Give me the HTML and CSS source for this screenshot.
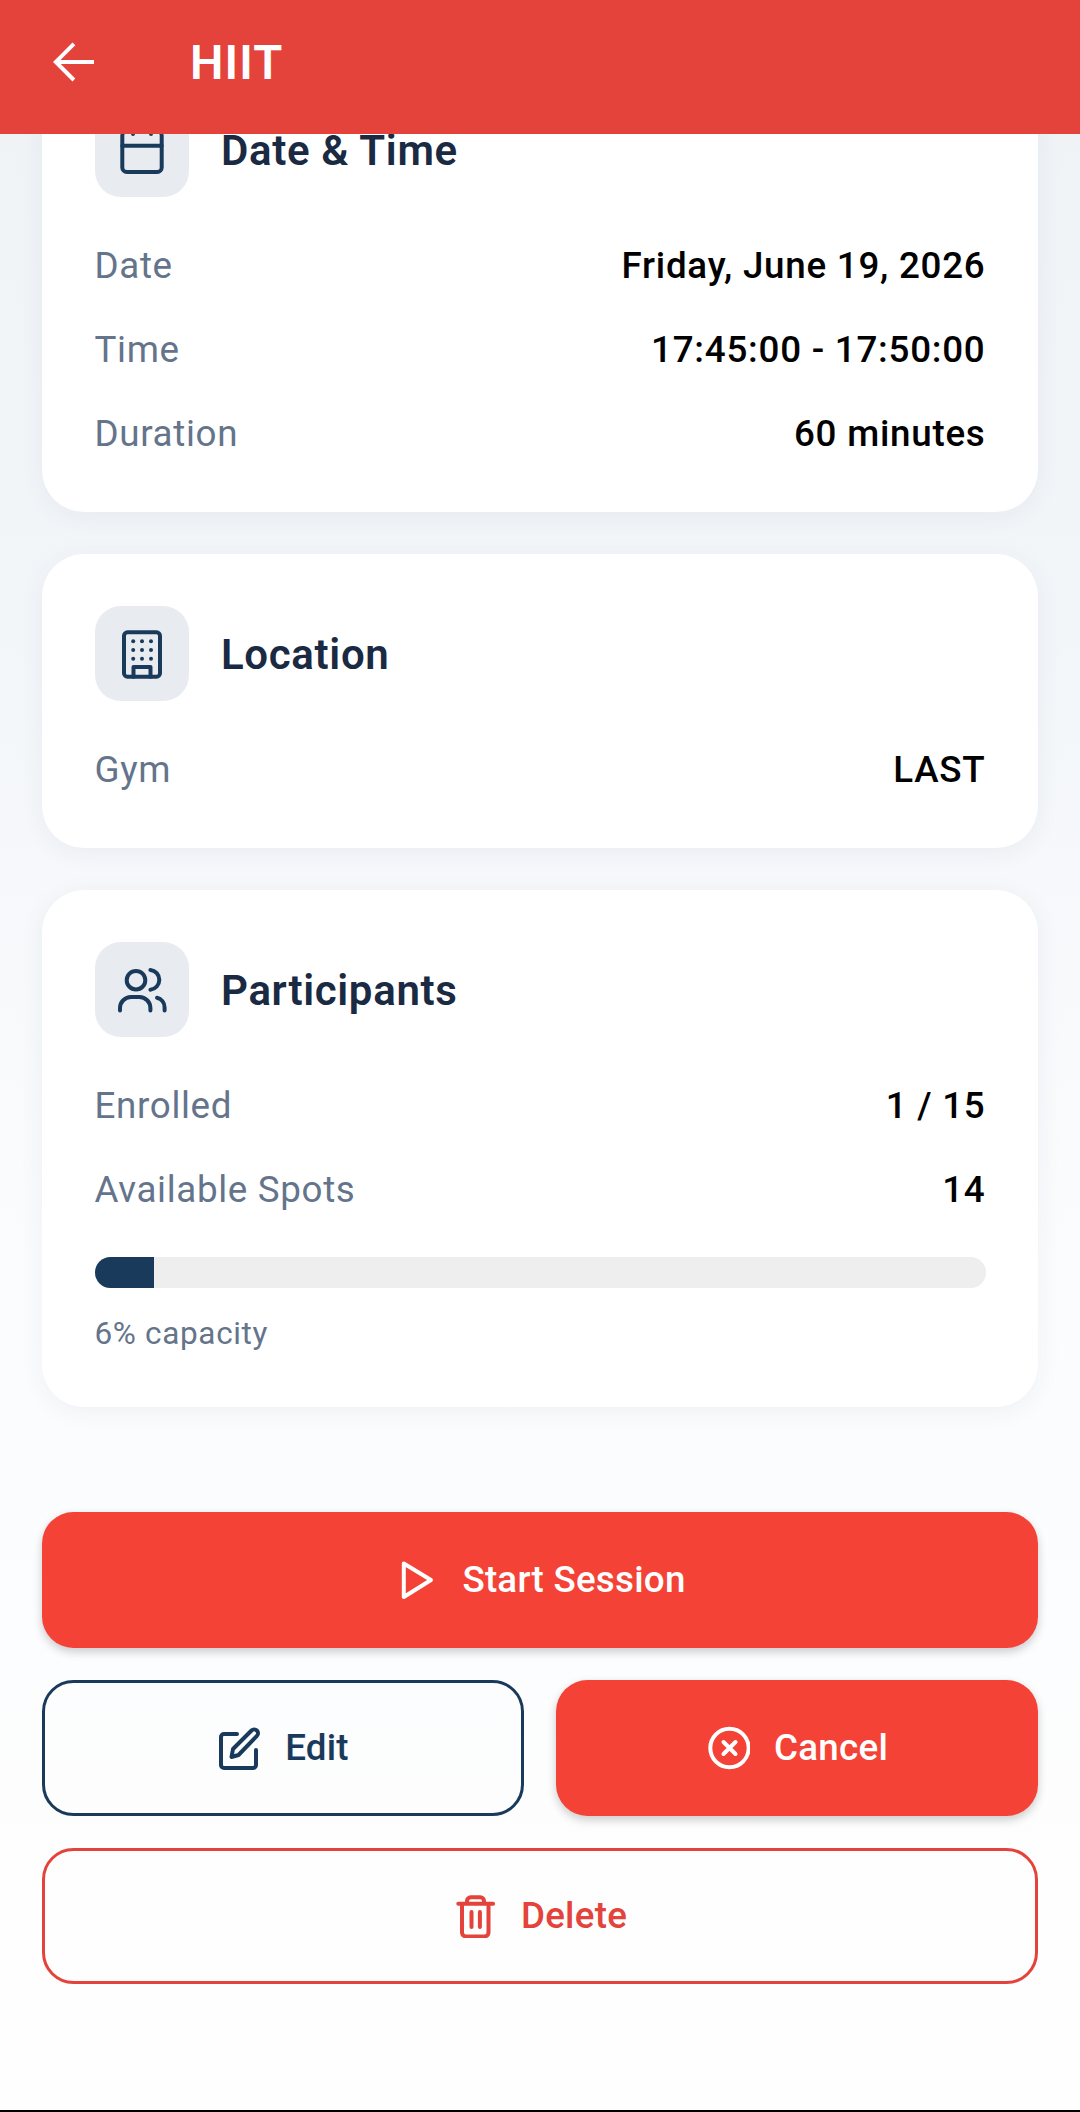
FILE: index.html
```html
<!DOCTYPE html>
<html lang="en">
<head>
<meta charset="utf-8">
<title>HIIT</title>
<link rel="stylesheet" href="styles.css">
</head>
<body>
<div class="screen">
  <header class="appbar">
    <svg class="back" viewBox="0 0 42 42" fill="none"><path d="M44 21H3M22 2 3 21l19 19" transform="translate(1 0) scale(.95)" stroke="#fff" stroke-width="4.2"/></svg>
    <h1 class="appbar-title">HIIT</h1>
  </header>
  <main class="content">
    <section class="card card-first">
      <div class="card-head">
        <div class="icon-box"><svg class="ic" viewBox="0 0 52 52" fill="none"><rect x="6.300" y="8" width="39.400" height="41" rx="4.500"/><path d="M6.300 22.800h39.400M17 2v9M35 2v9"/></svg></div>
        <h2 class="card-title">Date &amp; Time</h2>
      </div>
      <div class="row"><span class="label">Date</span><span class="value">Friday, June 19, 2026</span></div>
      <div class="row"><span class="label">Time</span><span class="value">17:45:00 - 17:50:00</span></div>
      <div class="row"><span class="label">Duration</span><span class="value">60 minutes</span></div>
    </section>
    <section class="card">
      <div class="card-head">
        <div class="icon-box"><svg class="ic" viewBox="0 0 52 52" fill="none"><rect x="8" y="5.300" width="36" height="44.400" rx="3.500"/><path d="M17.500 49.700V40h17v9.700"/><g class="dots"><circle cx="17.200" cy="14.200" r="2"/><circle cx="26" cy="14.200" r="2"/><circle cx="35" cy="14.200" r="2"/><circle cx="17.200" cy="23" r="2"/><circle cx="26" cy="23" r="2"/><circle cx="35" cy="23" r="2"/><circle cx="17.200" cy="31.700" r="2"/><circle cx="26" cy="31.700" r="2"/><circle cx="35" cy="31.700" r="2"/></g></svg></div>
        <h2 class="card-title">Location</h2>
      </div>
      <div class="row"><span class="label">Gym</span><span class="value">LAST</span></div>
    </section>
    <section class="card">
      <div class="card-head">
        <div class="icon-box"><svg class="ic" viewBox="0 0 52 52" fill="none"><circle cx="20" cy="17.200" r="9.300"/><path d="M34.400 7a9.900 9.900 0 0 1 0 19.700M4 47.600V45a11 11 0 0 1 11-11h8.400a11 11 0 0 1 11 11v2.600M41 34.800a10 10 0 0 1 7.600 9.700v3.100"/></svg></div>
        <h2 class="card-title">Participants</h2>
      </div>
      <div class="row"><span class="label">Enrolled</span><span class="value">1 / 15</span></div>
      <div class="row"><span class="label">Available Spots</span><span class="value">14</span></div>
      <div class="bar"><div class="bar-fill"></div></div>
      <p class="caption">6% capacity</p>
    </section>
    <div class="actions">
      <button class="btn btn-solid">
        <svg class="btn-ic" viewBox="-1.500 0 44 44" fill="none"><path d="M8.300 5.500 35.500 22 8.300 39Z"/></svg>
        <span>Start Session</span>
      </button>
      <div class="btn-pair">
        <button class="btn btn-navy">
          <svg class="btn-ic" viewBox="-1 0 44 44" fill="none"><path d="M19 8H6a3 3 0 0 0-3 3v28a3 3 0 0 0 3 3h29a3 3 0 0 0 3-3V24"/><path d="M13.500 31l1.500-8L33.500 4.500a3.800 3.800 0 0 1 5.400 5.400L20.500 29Z"/></svg>
          <span>Edit</span>
        </button>
        <button class="btn btn-solid">
          <svg class="btn-ic" viewBox="-1 0 44 44" fill="none"><circle cx="22.500" cy="22" r="19.200"/><path d="M16.500 16l12 12M28.500 16l-12 12"/></svg>
          <span>Cancel</span>
        </button>
      </div>
      <button class="btn btn-red">
        <svg class="btn-ic" viewBox="-1.500 0 44 44" fill="none"><path d="M3.800 9.800h34.800M12.500 9.800V7a3.700 3.700 0 0 1 3.700-3.700h9.600A3.700 3.700 0 0 1 29.500 7v2.800M7.500 10v28.400a4 4 0 0 0 4 4h18.500a4 4 0 0 0 4-4V10M17 18v15M25.400 18v15"/></svg>
        <span>Delete</span>
      </button>
    </div>
  </main>
  <div class="navline"></div>
</div>
</body>
</html>
```
FILE: styles.css
```css
* { box-sizing: border-box; }
html, body { margin: 0; padding: 0; }
body { font-family: Roboto, "Liberation Sans", sans-serif; background: #fff; }
.screen {
  width: 1080px; height: 2112px; display: flex; flex-direction: column; overflow: hidden;
  background: linear-gradient(180deg, #eff3f6 0%, #f3f6f9 30%, #fbfcfe 60%, #fefefe 100%);
}
.appbar {
  height: 134px; flex: none; background: #e4433b; display: flex; align-items: center;
  padding: 0 0 9px 52px; position: relative; z-index: 2;
}
.back { width: 42px; height: 42px; display: block; }
.appbar-title { margin: 0 0 0 96px; font-size: 47.250px; font-weight: 600; color: #fff; letter-spacing: 1.100px; line-height: 56px; }
.content { flex: 1; padding: 0 42px; display: flex; flex-direction: column; }
.card {
  background: #fff; border-radius: 42px; padding: 52.500px 52.500px 36px; margin-bottom: 42px;
  box-shadow: 0 5px 26px rgba(26, 58, 92, .06);
}
.card-first { margin-top: -84.500px; }
.card-head { display: flex; align-items: center; gap: 32px; margin-bottom: 27px; }
.icon-box {
  width: 94.500px; height: 94.500px; border-radius: 26px; background: #e8ebf0; flex: none;
  display: flex; align-items: center; justify-content: center;
}
.ic { width: 52px; height: 52px; display: block; stroke: #1a3a5c; stroke-width: 4; stroke-linecap: round; stroke-linejoin: round; }
.ic .dots { fill: #1a3a5c; stroke: none; }
.card-title { margin: 0; padding-top: 3px; font-size: 42px; font-weight: 600; color: #1a2a42; line-height: 52px; letter-spacing: .66px; }
.row { height: 84px; display: flex; justify-content: space-between; align-items: center; }
.label { font-size: 36.750px; color: #64748b; letter-spacing: .66px; }
.value { font-size: 36.750px; font-weight: 500; color: #000; letter-spacing: .75px; }
.bar { margin-top: 25px; height: 31.500px; border-radius: 16px; background: #eeeeee; overflow: hidden; }
.bar-fill { width: 59px; height: 100%; background: #1a3a5c; }
.caption { margin: 27.500px 0 19px; font-size: 31.500px; line-height: 36px; color: #64748b; letter-spacing: .66px; }
.actions { margin-top: 63px; display: flex; flex-direction: column; gap: 32px; }
.btn-pair { display: grid; grid-template-columns: 1fr 1fr; gap: 32px; }
.btn {
  height: 136px; border-radius: 31.500px; font: 500 36.750px Roboto, sans-serif; letter-spacing: .25px;
  display: flex; align-items: center; justify-content: center; gap: 24px; padding: 0; background: transparent; border: 0;
}
.btn-ic { width: 44px; height: 44px; display: block; stroke: currentColor; stroke-width: 4; stroke-linecap: round; stroke-linejoin: round; }
.btn-solid { background: #f44336; color: #fff; box-shadow: 0 4px 10px rgba(0, 0, 0, .2); }
.btn-navy { border: 3px solid #1a3a5c; color: #1a3a5c; }
.btn-red { border: 3px solid #e4433b; color: #e4433b; }
.navline { height: 2px; flex: none; background: #000; }
```
